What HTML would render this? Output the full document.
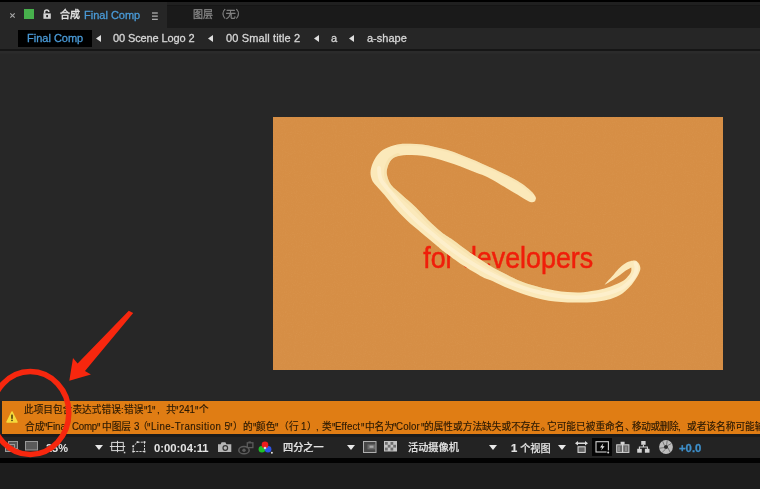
<!DOCTYPE html>
<html lang="zh">
<head>
<meta charset="utf-8">
<title>After Effects</title>
<style>
html,body{margin:0;padding:0;background:#232323;}
body{width:760px;height:489px;overflow:hidden;position:relative;
  font-family:"Liberation Sans","Noto Sans CJK SC",sans-serif;font-size:11px;color:#d6d6d6;}
.abs{position:absolute;white-space:nowrap;}
#topstrip{left:0;top:0;width:760px;height:2px;background:#000;}
#tabbar{left:0;top:2px;width:760px;height:25.5px;background:linear-gradient(#202020 0,#202020 3.5px,#161616 3.5px,#161616 4.5px,#1a1a1a 4.5px);}
#tabactive{left:0;top:2px;width:167px;height:27px;background:#262626;}
#crumbbar{left:0;top:27.5px;width:760px;height:21.5px;background:#262626;}
#sep{left:0;top:49px;width:760px;height:2px;background:#161616;}
#viewer{left:0;top:51px;width:760px;height:350px;background:linear-gradient(#2b2b2b 0,#2b2b2b 2px,#272727 3px);}
#comp{will-change:transform;left:273px;top:117px;width:450px;height:253px;background:#d68e45;overflow:hidden;}
#warn{left:1.5px;top:401px;width:759px;height:33px;background:#e07d14;color:#2a1904;font-size:10px;overflow:hidden;}
#toolgap{left:0;top:434px;width:760px;height:3px;background:#1b1b1b;}
#toolbar{left:0;top:437px;width:760px;height:21px;background:#232323;}
#blackline{left:0;top:457.5px;width:760px;height:5.5px;background:#020202;}
#bottom{left:0;top:463px;width:760px;height:26px;background:#1d1d1d;}
.w{position:absolute;white-space:nowrap;line-height:16px;height:16px;font-size:9.7px;-webkit-text-stroke:0.15px #2a1904;will-change:transform;}
.q{transform:scaleY(1.6);transform-origin:0 34%;}
.la{transform:scaleY(1.1);transform-origin:0 72%;-webkit-text-stroke:0.12px #231505;}
.t{position:absolute;white-space:nowrap;line-height:14px;height:14px;will-change:transform;-webkit-text-stroke:0.3px currentColor;}
.blue{color:#4a9bd8;}
.tri{position:absolute;width:0;height:0;border-top:3.5px solid transparent;border-bottom:3.5px solid transparent;border-right:5px solid #dcdcdc;top:34.8px;}
.dtri{position:absolute;width:0;height:0;border-left:4px solid transparent;border-right:4px solid transparent;border-top:5px solid #e6e6e6;top:445px;}
.tb{color:#e4e4e4;font-weight:bold;-webkit-text-stroke:0 !important;}
.tc{color:#e0e0e0;font-weight:500;-webkit-text-stroke:0.2px #e0e0e0 !important;}
.ic{position:absolute;overflow:visible;}
</style>
</head>
<body>
<div class="abs" id="topstrip"></div>
<div class="abs" id="tabbar"></div>
<div class="abs" id="tabactive"></div>
<div class="abs" id="crumbbar"></div>
<div class="abs" id="sep"></div>
<div class="abs" id="viewer"></div>

<!-- tab row -->
<svg class="ic" style="left:10px;top:13px;" width="5" height="5" viewBox="0 0 5 5"><path d="M0.3 0.3L4.7 4.7M4.7 0.3L0.3 4.7" stroke="#a8a8a8" stroke-width="1.1"/></svg>
<div class="abs" style="left:24px;top:9.4px;width:10px;height:9.4px;background:#47b04c;"></div>
<svg class="ic" style="left:43px;top:9px;" width="8" height="10" viewBox="0 0 8 10"><path d="M1.6 4.6V3a2.1 2.1 0 0 1 4.2 0" fill="none" stroke="#d4d4d4" stroke-width="1.5"/><rect x="0.4" y="4.4" width="7.4" height="5.4" fill="#d4d4d4"/><rect x="3.2" y="6" width="1.8" height="2.2" fill="#262626"/></svg>
<div class="t" id="tabzh" style="left:60px;top:8px;font-size:10px;color:#e2e2e2;font-weight:500;">合成</div>
<div class="t blue" id="tabname" style="left:83.5px;top:8px;font-size:11px;">Final Comp</div>
<svg class="ic" style="left:151.8px;top:11.5px;" width="7" height="9" viewBox="0 0 7 9"><path d="M0 1h5.800M0 4.100h5.800M0 7.250h5.800" stroke="#d6d6d6" stroke-width="1"/></svg>
<div class="t" id="tablayer" style="left:192.5px;top:8px;font-size:10px;color:#858585;">图层 （无）</div>

<!-- breadcrumb row -->
<div class="abs" style="left:18px;top:30px;width:74px;height:16.5px;background:#000;"></div>
<div class="t blue" id="c1" style="left:26.8px;top:31.2px;">Final Comp</div>
<svg class="ic" style="left:95.6px;top:34.8px;" width="5" height="7" viewBox="0 0 5 7"><path d="M5 0V7L0 3.500Z" fill="#dedede"/></svg>
<div class="t" id="c2" style="left:113px;top:31.2px;letter-spacing:-0.12px;">00 Scene Logo 2</div>
<svg class="ic" style="left:208px;top:34.8px;" width="5" height="7" viewBox="0 0 5 7"><path d="M5 0V7L0 3.500Z" fill="#dedede"/></svg>
<div class="t" id="c3" style="left:225.6px;top:31.2px;letter-spacing:0.13px;">00 Small title 2</div>
<svg class="ic" style="left:313.8px;top:34.8px;" width="5" height="7" viewBox="0 0 5 7"><path d="M5 0V7L0 3.500Z" fill="#dedede"/></svg>
<div class="t" id="c4" style="left:330.6px;top:31.2px;">a</div>
<svg class="ic" style="left:349.4px;top:34.8px;" width="5" height="7" viewBox="0 0 5 7"><path d="M5 0V7L0 3.500Z" fill="#dedede"/></svg>
<div class="t" id="c5" style="left:367px;top:31.2px;">a-shape</div>

<!-- comp -->
<div class="abs" id="comp">
<svg width="450" height="253" viewBox="273 117 450 253" style="position:absolute;left:0;top:0;">
  <defs>
    <filter id="grain" x="0" y="0" width="100%" height="100%"><feTurbulence type="fractalNoise" baseFrequency="0.9" numOctaves="2" seed="3" result="n"/><feColorMatrix in="n" type="matrix" values="0 0 0 0 0.85  0 0 0 0 0.55  0 0 0 0 0.25  0.9 0.9 0.9 0 -1.25"/></filter>
    <clipPath id="swclip"><path d="M536.0 198.5 C535.9 198.2 536.0 197.5 535.4 196.5 C534.8 195.5 534.0 194.1 532.5 192.5 C531.0 190.9 528.3 188.7 526.2 187.0 C524.2 185.3 523.1 184.4 520.0 182.5 C516.9 180.6 511.7 177.8 507.5 175.6 C503.3 173.4 498.8 171.2 495.0 169.4 C491.2 167.6 488.8 166.7 485.0 165.0 C481.2 163.3 476.7 161.2 472.5 159.5 C468.3 157.8 464.2 156.1 460.0 154.5 C455.8 152.9 451.7 151.2 447.5 150.0 C443.3 148.8 439.2 147.9 435.0 147.0 C430.8 146.1 426.7 145.0 422.5 144.5 C418.3 144.0 414.2 143.8 410.0 143.8 C405.8 143.8 401.7 143.7 397.5 144.5 C393.3 145.3 388.3 147.0 385.0 148.8 C381.7 150.5 379.6 152.5 377.5 155.0 C375.4 157.5 373.7 160.8 372.5 163.8 C371.3 166.7 370.6 169.8 370.5 172.5 C370.4 175.2 371.2 177.9 372.0 180.0 C372.8 182.1 373.4 182.5 375.5 185.0 C377.6 187.5 381.3 191.2 384.5 195.0 C387.7 198.8 390.8 203.3 394.5 207.5 C398.2 211.7 402.1 215.8 406.5 220.0 C410.9 224.2 416.1 228.3 421.0 232.5 C425.9 236.7 432.0 241.7 436.0 245.0 C440.0 248.3 440.6 249.2 445.0 252.5 C449.4 255.8 456.2 260.9 462.5 265.0 C468.8 269.1 477.5 274.3 482.5 277.0 C487.5 279.7 488.8 279.3 492.5 281.0 C496.2 282.7 500.8 285.2 505.0 287.0 C509.2 288.8 513.3 290.5 517.5 292.0 C521.7 293.5 525.8 295.0 530.0 296.2 C534.2 297.5 538.3 298.6 542.5 299.5 C546.7 300.4 550.8 301.0 555.0 301.5 C559.2 302.0 563.3 302.3 567.5 302.5 C571.7 302.7 575.4 302.6 580.0 302.5 C584.6 302.4 590.4 302.3 595.0 301.9 C599.6 301.4 603.3 300.9 607.5 299.8 C611.7 298.7 616.2 297.2 620.0 295.0 C623.8 292.8 627.3 289.3 630.0 286.5 C632.7 283.7 634.5 281.1 636.2 278.3 C638.0 275.6 639.6 272.2 640.2 270.0 C640.8 267.8 640.0 266.3 639.6 265.0 C639.2 263.7 638.5 262.9 637.7 262.2 C636.9 261.5 636.1 260.8 635.0 260.6 C633.9 260.4 631.7 260.9 631.0 261.0 C630.2 261.3 628.1 261.7 626.2 262.8 C624.4 263.9 622.1 265.6 620.0 267.5 C617.9 269.4 615.8 272.1 613.8 274.4 C611.7 276.7 609.1 279.5 607.5 281.2 C605.9 283.0 604.9 284.4 604.4 285.0 C606.0 284.0 611.1 280.9 613.8 279.2 C616.4 277.5 617.9 276.5 620.0 275.0 C622.1 273.5 624.4 271.6 626.2 270.3 C628.1 269.1 630.4 268.0 631.2 267.5 C631.3 268.0 631.5 269.5 631.3 270.5 C631.1 271.5 631.0 272.3 630.0 273.8 C629.0 275.2 627.2 277.5 625.5 279.0 C623.8 280.5 623.0 281.1 620.0 282.5 C617.0 283.9 611.7 286.2 607.5 287.6 C603.3 289.0 599.6 289.8 595.0 290.6 C590.4 291.4 584.6 292.3 580.0 292.5 C575.4 292.7 571.7 292.3 567.5 292.0 C563.3 291.7 559.2 291.2 555.0 290.5 C550.8 289.8 546.7 289.0 542.5 288.0 C538.3 287.0 534.2 285.8 530.0 284.5 C525.8 283.2 520.4 281.2 517.5 280.0 C514.6 278.8 515.2 278.8 512.5 277.5 C509.8 276.2 505.5 274.1 501.5 272.0 C497.5 269.9 494.0 268.2 488.8 265.0 C483.5 261.8 476.0 256.7 470.0 252.5 C464.0 248.3 457.7 243.3 453.0 240.0 C448.3 236.7 446.1 235.8 441.9 232.5 C437.7 229.2 432.3 224.2 428.0 220.0 C423.7 215.8 420.3 211.7 416.0 207.5 C411.7 203.3 406.1 198.8 402.0 195.0 C397.9 191.2 393.8 188.3 391.2 185.0 C388.8 181.7 387.6 177.9 387.0 175.0 C386.4 172.1 386.8 170.0 387.5 167.5 C388.2 165.0 389.6 161.9 391.2 160.0 C392.9 158.1 394.4 157.1 397.5 156.2 C400.6 155.4 405.8 155.1 410.0 155.0 C414.2 154.9 418.3 155.2 422.5 155.8 C426.7 156.3 430.8 157.2 435.0 158.2 C439.2 159.3 443.3 160.7 447.5 162.0 C451.7 163.3 455.8 164.7 460.0 166.2 C464.2 167.8 468.3 169.6 472.5 171.2 C476.7 172.9 481.2 174.3 485.0 176.0 C488.8 177.7 491.2 179.1 495.0 181.2 C498.8 183.4 503.3 186.2 507.5 188.8 C511.7 191.2 516.9 194.4 520.0 196.2 C523.1 198.1 524.4 199.0 526.2 200.0 C528.1 201.0 529.9 202.0 531.2 202.2 C532.6 202.5 533.8 202.2 534.6 201.6 C535.4 201.0 535.8 199.0 536.0 198.5Z"/></clipPath>
  </defs>
  <rect x="273" y="117" width="450" height="253" filter="url(#grain)" opacity="0.1"/>
  <text id="devtext" x="423.2" y="267.9" font-family="Liberation Sans, sans-serif" font-size="29.2" fill="#f01e0a" stroke="#f01e0a" stroke-width="0.5" textLength="170" lengthAdjust="spacingAndGlyphs">for developers</text>
  <path id="swoosh" fill="#fbe9ba" d="M536.0 198.5 C535.9 198.2 536.0 197.5 535.4 196.5 C534.8 195.5 534.0 194.1 532.5 192.5 C531.0 190.9 528.3 188.7 526.2 187.0 C524.2 185.3 523.1 184.4 520.0 182.5 C516.9 180.6 511.7 177.8 507.5 175.6 C503.3 173.4 498.8 171.2 495.0 169.4 C491.2 167.6 488.8 166.7 485.0 165.0 C481.2 163.3 476.7 161.2 472.5 159.5 C468.3 157.8 464.2 156.1 460.0 154.5 C455.8 152.9 451.7 151.2 447.5 150.0 C443.3 148.8 439.2 147.9 435.0 147.0 C430.8 146.1 426.7 145.0 422.5 144.5 C418.3 144.0 414.2 143.8 410.0 143.8 C405.8 143.8 401.7 143.7 397.5 144.5 C393.3 145.3 388.3 147.0 385.0 148.8 C381.7 150.5 379.6 152.5 377.5 155.0 C375.4 157.5 373.7 160.8 372.5 163.8 C371.3 166.7 370.6 169.8 370.5 172.5 C370.4 175.2 371.2 177.9 372.0 180.0 C372.8 182.1 373.4 182.5 375.5 185.0 C377.6 187.5 381.3 191.2 384.5 195.0 C387.7 198.8 390.8 203.3 394.5 207.5 C398.2 211.7 402.1 215.8 406.5 220.0 C410.9 224.2 416.1 228.3 421.0 232.5 C425.9 236.7 432.0 241.7 436.0 245.0 C440.0 248.3 440.6 249.2 445.0 252.5 C449.4 255.8 456.2 260.9 462.5 265.0 C468.8 269.1 477.5 274.3 482.5 277.0 C487.5 279.7 488.8 279.3 492.5 281.0 C496.2 282.7 500.8 285.2 505.0 287.0 C509.2 288.8 513.3 290.5 517.5 292.0 C521.7 293.5 525.8 295.0 530.0 296.2 C534.2 297.5 538.3 298.6 542.5 299.5 C546.7 300.4 550.8 301.0 555.0 301.5 C559.2 302.0 563.3 302.3 567.5 302.5 C571.7 302.7 575.4 302.6 580.0 302.5 C584.6 302.4 590.4 302.3 595.0 301.9 C599.6 301.4 603.3 300.9 607.5 299.8 C611.7 298.7 616.2 297.2 620.0 295.0 C623.8 292.8 627.3 289.3 630.0 286.5 C632.7 283.7 634.5 281.1 636.2 278.3 C638.0 275.6 639.6 272.2 640.2 270.0 C640.8 267.8 640.0 266.3 639.6 265.0 C639.2 263.7 638.5 262.9 637.7 262.2 C636.9 261.5 636.1 260.8 635.0 260.6 C633.9 260.4 631.7 260.9 631.0 261.0 C630.2 261.3 628.1 261.7 626.2 262.8 C624.4 263.9 622.1 265.6 620.0 267.5 C617.9 269.4 615.8 272.1 613.8 274.4 C611.7 276.7 609.1 279.5 607.5 281.2 C605.9 283.0 604.9 284.4 604.4 285.0 C606.0 284.0 611.1 280.9 613.8 279.2 C616.4 277.5 617.9 276.5 620.0 275.0 C622.1 273.5 624.4 271.6 626.2 270.3 C628.1 269.1 630.4 268.0 631.2 267.5 C631.3 268.0 631.5 269.5 631.3 270.5 C631.1 271.5 631.0 272.3 630.0 273.8 C629.0 275.2 627.2 277.5 625.5 279.0 C623.8 280.5 623.0 281.1 620.0 282.5 C617.0 283.9 611.7 286.2 607.5 287.6 C603.3 289.0 599.6 289.8 595.0 290.6 C590.4 291.4 584.6 292.3 580.0 292.5 C575.4 292.7 571.7 292.3 567.5 292.0 C563.3 291.7 559.2 291.2 555.0 290.5 C550.8 289.8 546.7 289.0 542.5 288.0 C538.3 287.0 534.2 285.8 530.0 284.5 C525.8 283.2 520.4 281.2 517.5 280.0 C514.6 278.8 515.2 278.8 512.5 277.5 C509.8 276.2 505.5 274.1 501.5 272.0 C497.5 269.9 494.0 268.2 488.8 265.0 C483.5 261.8 476.0 256.7 470.0 252.5 C464.0 248.3 457.7 243.3 453.0 240.0 C448.3 236.7 446.1 235.8 441.9 232.5 C437.7 229.2 432.3 224.2 428.0 220.0 C423.7 215.8 420.3 211.7 416.0 207.5 C411.7 203.3 406.1 198.8 402.0 195.0 C397.9 191.2 393.8 188.3 391.2 185.0 C388.8 181.7 387.6 177.9 387.0 175.0 C386.4 172.1 386.8 170.0 387.5 167.5 C388.2 165.0 389.6 161.9 391.2 160.0 C392.9 158.1 394.4 157.1 397.5 156.2 C400.6 155.4 405.8 155.1 410.0 155.0 C414.2 154.9 418.3 155.2 422.5 155.8 C426.7 156.3 430.8 157.2 435.0 158.2 C439.2 159.3 443.3 160.7 447.5 162.0 C451.7 163.3 455.8 164.7 460.0 166.2 C464.2 167.8 468.3 169.6 472.5 171.2 C476.7 172.9 481.2 174.3 485.0 176.0 C488.8 177.7 491.2 179.1 495.0 181.2 C498.8 183.4 503.3 186.2 507.5 188.8 C511.7 191.2 516.9 194.4 520.0 196.2 C523.1 198.1 524.4 199.0 526.2 200.0 C528.1 201.0 529.9 202.0 531.2 202.2 C532.6 202.5 533.8 202.2 534.6 201.6 C535.4 201.0 535.8 199.0 536.0 198.5Z"/>
  <g clip-path="url(#swclip)" fill="none" stroke-linecap="round">
    <path d="M542.5 288.0 C540.4 287.4 534.2 285.8 530.0 284.5 C525.8 283.2 520.4 281.2 517.5 280.0 C514.6 278.8 515.2 278.8 512.5 277.5 C509.8 276.2 505.5 274.1 501.5 272.0 C497.5 269.9 494.0 268.2 488.8 265.0 C483.5 261.8 476.0 256.7 470.0 252.5 C464.0 248.3 457.7 243.3 453.0 240.0 C448.3 236.7 446.1 235.8 441.9 232.5 C437.7 229.2 432.3 224.2 428.0 220.0 C423.7 215.8 420.3 211.7 416.0 207.5 C411.7 203.3 406.1 198.8 402.0 195.0 C397.9 191.2 393.8 188.3 391.2 185.0 C388.8 181.7 387.6 177.9 387.0 175.0 C386.4 172.1 386.8 170.0 387.5 167.5 C388.2 165.0 389.6 161.9 391.2 160.0 C392.9 158.1 396.5 156.9 397.5 156.2" stroke="#f2d99f" stroke-width="6" opacity="0.4"/>
    <path d="M532.5 192.5 C531.5 191.6 528.3 188.7 526.2 187.0 C524.2 185.3 523.1 184.4 520.0 182.5 C516.9 180.6 511.7 177.8 507.5 175.6 C503.3 173.4 498.8 171.2 495.0 169.4 C491.2 167.6 488.8 166.7 485.0 165.0 C481.2 163.3 476.7 161.2 472.5 159.5 C468.3 157.8 464.2 156.1 460.0 154.5 C455.8 152.9 451.7 151.2 447.5 150.0 C443.3 148.8 439.2 147.9 435.0 147.0 C430.8 146.1 426.7 145.0 422.5 144.5 C418.3 144.0 414.2 143.8 410.0 143.8 C405.8 143.8 399.6 144.4 397.5 144.5" stroke="#f3dca6" stroke-width="4" opacity="0.35"/>
    <path d="M379.0 168.0 C379.3 170.0 378.8 175.7 381.0 180.0 C383.2 184.3 388.2 189.3 392.0 194.0 C395.8 198.7 399.9 203.6 404.0 208.0 C408.1 212.4 412.0 216.3 416.5 220.5 C421.0 224.7 425.9 228.8 431.0 233.0 C436.1 237.2 441.2 241.6 447.0 246.0 C452.8 250.4 459.3 255.2 466.0 259.5 C472.7 263.8 479.7 268.1 487.0 272.0 C494.3 275.9 501.8 279.8 510.0 283.0 C518.2 286.2 526.5 289.2 536.0 291.5 C545.5 293.8 557.2 296.2 567.0 297.0 C576.8 297.8 586.2 297.3 595.0 296.0 C603.8 294.7 613.7 292.0 620.0 289.0 C626.3 286.0 630.2 281.3 633.0 278.0 C635.8 274.7 636.1 271.4 636.5 269.0 C636.9 266.6 635.7 264.4 635.5 263.5" stroke="#fff6dc" stroke-width="4" opacity="0.5"/>
  </g>
</svg>
</div>

<!-- warning bar -->
<div class="abs" id="warn">
  <svg style="position:absolute;left:4.5px;top:10px;" width="12" height="12" viewBox="0 0 12 12"><path d="M6 1L11 11H1Z" fill="#f4da3c" stroke="#f4da3c" stroke-width="1.6" stroke-linejoin="round"/><rect x="5.3" y="3.6" width="1.4" height="4.2" fill="#3a2a08"/><rect x="5.3" y="8.7" width="1.4" height="1.4" fill="#3a2a08"/></svg>
  <span class="w" id="a0" style="left:22.85px;top:1.2px;">此项目包含表达式错误</span><span class="w" id="a1" style="left:119.40px;top:1.2px;">:</span><span class="w" id="a2" style="left:122.50px;top:1.2px;">错误</span><span class="w q" id="a3" style="left:142.10px;top:1.2px;">&quot;</span><span class="w la" id="a4" style="left:145.40px;top:1.2px;">1</span><span class="w q" id="a5" style="left:150.60px;top:1.2px;">&quot;</span><span class="w" id="a6" style="left:155.20px;top:1.2px;">,</span><span class="w" id="a7" style="left:164.10px;top:1.2px;">共</span><span class="w q" id="a8" style="left:173.70px;top:1.2px;">&quot;</span><span class="w la" id="a9" style="left:177.00px;top:1.2px;letter-spacing:-0.17px;">241</span><span class="w q" id="a10" style="left:193.10px;top:1.2px;">&quot;</span><span class="w" id="a11" style="left:197.50px;top:1.2px;">个</span>
  <span class="w" id="b0" style="left:23.10px;top:17.7px;">合成</span><span class="w q" id="b1" style="left:42.60px;top:17.7px;">&quot;</span><span class="w la" id="b2" style="left:45.50px;top:17.7px;">Final</span><span class="w la" id="b3" style="left:70.00px;top:17.7px;letter-spacing:-0.2px;">Comp</span><span class="w q" id="b4" style="left:95.60px;top:17.7px;">&quot;</span><span class="w" id="b5" style="left:100.10px;top:17.7px;">中图层</span><span class="w la" id="b6" style="left:132.60px;top:17.7px;">3</span><span class="w" id="b7" style="left:136.90px;top:17.7px;">（</span><span class="w q" id="b8" style="left:145.60px;top:17.7px;">&quot;</span><span class="w la" id="b9" style="left:149.20px;top:17.7px;letter-spacing:0.44px;">Line-Transition 5</span><span class="w q" id="b10" style="left:227.85px;top:17.7px;">&quot;</span><span class="w" id="b11" style="left:231.90px;top:17.7px;">）</span><span class="w" id="b12" style="left:241.85px;top:17.7px;">的</span><span class="w q" id="b13" style="left:251.10px;top:17.7px;">&quot;</span><span class="w" id="b14" style="left:254.35px;top:17.7px;">颜色</span><span class="w q" id="b15" style="left:273.70px;top:17.7px;">&quot;</span><span class="w" id="b16" style="left:277.50px;top:17.7px;">（</span><span class="w" id="b17" style="left:287.50px;top:17.7px;">行</span><span class="w la" id="b18" style="left:299.80px;top:17.7px;">1</span><span class="w" id="b19" style="left:305.00px;top:17.7px;">）</span><span class="w" id="b20" style="left:314.90px;top:17.7px;">,</span><span class="w" id="b21" style="left:320.60px;top:17.7px;">类</span><span class="w q" id="b22" style="left:330.35px;top:17.7px;">&quot;</span><span class="w la" id="b23" style="left:333.50px;top:17.7px;letter-spacing:0.08px;">Effect</span><span class="w q" id="b24" style="left:359.10px;top:17.7px;">&quot;</span><span class="w" id="b25" style="left:363.10px;top:17.7px;letter-spacing:-0.1px;">中名为</span><span class="w q" id="b26" style="left:391.70px;top:17.7px;">&quot;</span><span class="w la" id="b27" style="left:394.90px;top:17.7px;letter-spacing:0.17px;">Color</span><span class="w q" id="b28" style="left:419.10px;top:17.7px;">&quot;</span><span class="w" id="b29" style="left:422.50px;top:17.7px;">的属性或方法缺失或不存在</span><span class="w" id="b30" style="left:539.30px;top:17.7px;">。</span><span class="w" id="b31" style="left:545.60px;top:17.7px;">它可能已被重命名</span><span class="w" id="b32" style="left:623.10px;top:17.7px;">、</span><span class="w" id="b33" style="left:630.10px;top:17.7px;letter-spacing:-0.45px;">移动或删除</span><span class="w" id="b34" style="left:676.00px;top:17.7px;">,</span><span class="w" id="b35" style="left:685.00px;top:17.7px;">或者该名称可能输入错误</span>
</div>

<!-- toolbar -->
<div class="abs" id="toolgap"></div>
<div class="abs" id="toolbar"></div>
<div class="abs" id="blackline"></div>
<div class="abs" id="bottom"></div>

<!-- toolbar icons -->
<svg class="ic" style="left:5px;top:441px;" width="14" height="12" viewBox="0 0 14 12"><rect x="3.5" y="0.5" width="9" height="7" fill="#555" stroke="#999"/><rect x="0.5" y="3.5" width="9" height="7" fill="#555" stroke="#999"/><path d="M11.5 9v2M13 8v3" stroke="#999"/></svg>
<svg class="ic" style="left:25px;top:441px;" width="13" height="10" viewBox="0 0 13 10"><rect x="0.5" y="0.5" width="12" height="8.5" fill="#5a5a5a" stroke="#9a9a9a"/></svg>
<div class="t tb" id="zoom" style="left:46px;top:441px;">25%</div>
<svg class="ic" style="left:95px;top:445px;" width="8" height="5" viewBox="0 0 8 5"><path d="M0 0H8L4 5Z" fill="#e8e8e8"/></svg>
<svg class="ic" style="left:109px;top:440px;" width="17" height="14" viewBox="0 0 17 14"><rect x="2.7" y="2.4" width="11.6" height="8.2" fill="none" stroke="#d8d8d8" stroke-width="1"/><path d="M8.5 0.8V12.2M0.8 6.5H16.2" stroke="#d8d8d8" stroke-width="1"/><rect x="6.8" y="4.8" width="3.4" height="3.4" fill="#232323"/><path d="M8.5 4.6V8.4M6.6 6.5H10.4" stroke="#d8d8d8" stroke-width="1"/><rect x="14.8" y="11.8" width="1.5" height="1.5" fill="#d8d8d8"/></svg>
<svg class="ic" style="left:132px;top:441px;" width="14" height="12" viewBox="0 0 14 12"><path d="M5.5 1.2L12.5 1.2L12.5 10.5L1.2 10.5L1.2 5.2Z" fill="none" stroke="#cfcfcf" stroke-width="1" stroke-dasharray="2.2 1"/><g fill="#e0e0e0"><rect x="4.6" y="0.2" width="1.8" height="1.8"/><rect x="11.6" y="0.2" width="1.8" height="1.8"/><rect x="11.6" y="9.6" width="1.8" height="1.8"/><rect x="0.3" y="9.6" width="1.8" height="1.8"/><rect x="0.3" y="4.4" width="1.8" height="1.8"/></g></svg>
<div class="t tb" id="tc" style="left:154.4px;top:441px;font-size:11.3px;">0:00:04:11</div>
<svg class="ic" style="left:218px;top:441.5px;" width="14" height="10" viewBox="0 0 14 10"><path d="M0 2.2H2.6L3.6 0.3H7.4L8.4 2.2H13.3V10H0Z" fill="#b6b6b6"/><circle cx="7.3" cy="6" r="2.9" fill="#333"/><circle cx="7.3" cy="6" r="1.7" fill="#b6b6b6"/></svg>
<svg class="ic" style="left:238px;top:440.5px;" width="16" height="14" viewBox="0 0 16 14"><ellipse cx="6" cy="9.2" rx="5.2" ry="3.6" fill="none" stroke="#5c5c5c" stroke-width="1.5"/><circle cx="6" cy="9.2" r="1.7" fill="#5c5c5c"/><rect x="9.3" y="1.8" width="5.6" height="4.8" fill="none" stroke="#5c5c5c" stroke-width="1.3"/><rect x="10.5" y="0.4" width="2.4" height="1.4" fill="#5c5c5c"/></svg>
<svg class="ic" style="left:258px;top:440.5px;" width="16" height="14" viewBox="0 0 16 14"><circle cx="3.9" cy="8.2" r="3.3" fill="#1fbf2a"/><circle cx="10.1" cy="8.2" r="3.3" fill="#2f55e8"/><circle cx="7" cy="3.9" r="3.3" fill="#ee1c1c"/><circle cx="7" cy="7" r="1.3" fill="#d9d9d9"/><circle cx="13.9" cy="11.8" r="1" fill="#e4e4e4"/></svg>
<div class="t tc" id="res" style="left:283px;top:440.5px;font-size:10.2px;">四分之一</div>
<svg class="ic" style="left:347.3px;top:445px;" width="8" height="5" viewBox="0 0 8 5"><path d="M0 0H8L4 5Z" fill="#e8e8e8"/></svg>
<svg class="ic" style="left:363px;top:441px;" width="14" height="12" viewBox="0 0 14 12"><rect x="0.5" y="0.5" width="12.5" height="11" fill="#484848" stroke="#b0b0b0"/><rect x="4.5" y="3.4" width="7.5" height="5" fill="#6a6a6a"/><rect x="6.5" y="4.6" width="4" height="2.2" fill="#a8a8a8"/></svg>
<svg class="ic" style="left:384px;top:441px;" width="13" height="11" viewBox="0 0 13 11"><rect x="0" y="0" width="13" height="10.5" fill="#c4c4c4"/><g fill="#6e6e6e"><rect x="1" y="1" width="2.75" height="2.8"/><rect x="6.5" y="1" width="2.75" height="2.8"/><rect x="3.75" y="3.8" width="2.75" height="2.8"/><rect x="9.25" y="3.8" width="2.75" height="2.8"/><rect x="1" y="6.6" width="2.75" height="2.9"/><rect x="6.5" y="6.6" width="2.75" height="2.9"/></g></svg>
<div class="t tc" id="cam" style="left:407.7px;top:440.5px;font-size:10.2px;">活动摄像机</div>
<svg class="ic" style="left:488.8px;top:445px;" width="8" height="5" viewBox="0 0 8 5"><path d="M0 0H8L4 5Z" fill="#e8e8e8"/></svg>
<div class="t tc" id="views" style="left:511px;top:440.5px;font-size:10.2px;"><span style="font-size:11.3px;font-weight:bold;">1</span> 个视图</div>
<svg class="ic" style="left:558.4px;top:445px;" width="8" height="5" viewBox="0 0 8 5"><path d="M0 0H8L4 5Z" fill="#e8e8e8"/></svg>
<svg class="ic" style="left:575px;top:441px;" width="14" height="12" viewBox="0 0 14 12"><path d="M0 2.3L3 0V1.6H10V0L13 2.3L10 4.6V3H3V4.6Z" fill="#dcdcdc"/><rect x="3" y="5.8" width="7.2" height="5.6" fill="#666" stroke="#dcdcdc" stroke-width="1"/></svg>
<div class="abs" style="left:592px;top:438px;width:20.3px;height:17.6px;background:#050505;"></div>
<svg class="ic" style="left:595px;top:441px;" width="15" height="13" viewBox="0 0 15 13"><rect x="1" y="0.7" width="12.4" height="10.3" fill="none" stroke="#cfcfcf" stroke-width="1.1"/><path d="M8.3 2.2L5 6.4H7.2L6 9.6L9.6 5.2H7.4Z" fill="#e6e6e6"/><rect x="11.6" y="9.4" width="3" height="3" fill="#050505"/><circle cx="13.2" cy="11.4" r="1" fill="#e0e0e0"/></svg>
<svg class="ic" style="left:616px;top:441px;" width="14" height="12" viewBox="0 0 14 12"><path d="M4.6 0.8H8.6V3L6.6 4.6L4.6 3Z" fill="#d4d4d4"/><rect x="0.7" y="3.8" width="12.2" height="7.6" fill="#6a6a6a" stroke="#d4d4d4" stroke-width="1"/><path d="M6.6 3.5V11.4" stroke="#d4d4d4" stroke-width="1.2"/><path d="M3 5.6V10M10 5.6V10" stroke="#9a9a9a" stroke-width="1.4"/></svg>
<svg class="ic" style="left:636.5px;top:441px;" width="13" height="12" viewBox="0 0 13 12"><rect x="4.2" y="0" width="4.4" height="3.8" fill="#d4d4d4"/><path d="M6.4 3.8V6M2.4 8V6H10.4V8" fill="none" stroke="#d4d4d4" stroke-width="1.1"/><rect x="0.2" y="7.8" width="4.6" height="3.9" fill="#d4d4d4"/><rect x="7.9" y="7.8" width="4.6" height="3.9" fill="#d4d4d4"/></svg>
<svg class="ic" style="left:658.6px;top:440px;" width="14" height="14" viewBox="0 0 14 14"><circle cx="7" cy="7" r="6.9" fill="#bdbdbd"/><circle cx="7" cy="7" r="2.1" fill="#2a2a2a"/><g stroke="#6d6d6d" stroke-width="0.9" fill="none"><path d="M8.6 5.6L12.5 3.4"/><path d="M9 7.8L11 12"/><path d="M6.6 9.1L3.2 12.4"/><path d="M5 7.6L0.6 8.2"/><path d="M5.4 5.4L3.6 1.2"/><path d="M7.6 4.9L8.2 0.4"/></g></svg>
<div class="t" id="exp" style="left:678.6px;top:441px;font-size:11.3px;color:#3e8fca;font-weight:bold;">+0.0</div>

<!-- annotation -->
<svg class="abs" style="left:0;top:0;pointer-events:none;" width="760" height="489" viewBox="0 0 760 489">
  <ellipse cx="30.3" cy="413" rx="38.5" ry="41.5" fill="none" stroke="#f7270e" stroke-width="5.5"/>
  <path d="M128.800 310.700 L133.200 312.900 L85 370.900 L90.900 374.600 L69.300 380.700 L73 358 L77.600 363.500 Z" fill="#f7270e"/>
</svg>
</body>
</html>
